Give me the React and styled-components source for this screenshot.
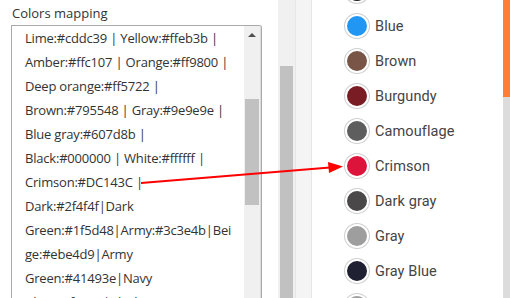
import React from "react";
import styled, { createGlobalStyle } from "styled-components";

const GlobalStyle = createGlobalStyle`
  html, body {
    margin: 0;
    padding: 0;
    background: #fff;
    overflow: hidden;
  }
`;

const Page = styled.div`
  position: relative;
  display: flex;
  width: 510px;
  height: 298px;
  overflow: hidden;
  background: #fff;
`;

const LeftPane = styled.div`
  width: 278px;
  padding: 5px 0 0 11px;
  box-sizing: border-box;
  font-family: "Open Sans", "Noto Sans", sans-serif;
  color: #333;
`;

const Label = styled.div`
  font-size: 13px;
  line-height: 17px;
  margin: 0 0 3px 1px;
  color: #333;
`;

const TextBox = styled.div`
  display: flex;
  width: 251px;
  height: 300px;
  border: 1px solid #a9a9a9;
  border-bottom: none;
  border-radius: 0 3px 0 0;
  box-sizing: border-box;
  overflow: hidden;
`;

const Lines = styled.div`
  flex: 1;
  padding: 0 0 0 13px;
  font-size: 13px;
  line-height: 24px;
  color: #333;
  white-space: nowrap;
  letter-spacing: -0.2px;
`;

const Track = styled.div`
  display: flex;
  flex-direction: column;
  align-items: center;
  width: ${(p) => p.$w}px;
  background: #f0f0f0;
  border-right: ${(p) => (p.$edge ? "1px solid #dcdcdc" : "none")};
  padding-top: ${(p) => p.$top}px;
  box-sizing: border-box;
`;

const Arrow = styled.div`
  width: 0;
  height: 0;
  border-left: 4px solid transparent;
  border-right: 4px solid transparent;
  border-bottom: 4px solid #505050;
  margin-bottom: ${(p) => p.$gap}px;
`;

const Thumb = styled.div`
  width: ${(p) => p.$w}px;
  height: ${(p) => p.$h}px;
  background: #c1c1c1;
`;

const Strip = styled.div`
  width: 15px;
  background: #f4f4f4;
  border-left: 1px solid #e6e6e6;
  border-right: 1px solid #e6e6e6;
`;

const RightPane = styled.div`
  flex: 1;
  display: flex;
  flex-direction: column;
  gap: 9px;
  padding-left: 33px;
  margin-top: -22px;
  font-family: Roboto, "Noto Sans", sans-serif;
`;

const Item = styled.div`
  flex: none;
  display: flex;
  align-items: center;
  gap: 6px;
  height: 26px;
  font-size: 14.5px;
  color: #444;
  letter-spacing: 0.1px;
`;

const Swatch = styled.span`
  width: 20px;
  height: 20px;
  border-radius: 50%;
  background: ${(p) => p.$c};
  border: 2px solid #fff;
  box-shadow: 0 0 0 1px #cfcfcf;
  flex: none;
`;

const Scroll = styled.div`
  display: flex;
  flex-direction: column;
  width: 7px;
  background: #dcdcdc;
`;

const ScrollThumb = styled.div`
  height: 97px;
  background: #fd7e34;
`;

const Pointer = styled.svg`
  position: absolute;
  left: 0;
  top: 0;
  pointer-events: none;
`;

const lines = [
  "Lime:#cddc39 | Yellow:#ffeb3b |",
  "Amber:#ffc107 | Orange:#ff9800 |",
  "Deep orange:#ff5722 |",
  "Brown:#795548 | Gray:#9e9e9e |",
  "Blue gray:#607d8b |",
  "Black:#000000 | White:#ffffff |",
  "Crimson:#DC143C |",
  "Dark:#2f4f4f|Dark",
  "Green:#1f5d48|Army:#3c3e4b|Bei",
  "ge:#ebe4d9|Army",
  "Green:#41493e|Navy",
  "Blue:#1f2631|Black Navy",
];

const colors = [
  ["Black", "#222222"],
  ["Blue", "#2196f3"],
  ["Brown", "#795548"],
  ["Burgundy", "#7a1c24"],
  ["Camouflage", "#5f5e5e"],
  ["Crimson", "#dc143c"],
  ["Dark gray", "#4a4849"],
  ["Gray", "#9e9e9e"],
  ["Gray Blue", "#1f2031"],
  ["Green", "#a0a0a0"],
];

const App = () => (
  <>
    <GlobalStyle />
    <Page>
      <LeftPane>
        <Label>Colors mapping</Label>
        <TextBox>
          <Lines>
            {lines.map((l) => (
              <div key={l}>{l}</div>
            ))}
          </Lines>
          <Track $w={17} $top={7} $edge>
            <Arrow $gap={62} />
            <Thumb $w={14} $h={106} />
          </Track>
        </TextBox>
      </LeftPane>
      <Track $w={17} $top={66}>
        <Thumb $w={13} $h={240} />
      </Track>
      <Strip />
      <RightPane>
        {colors.map(([name, c]) => (
          <Item key={name}>
            <Swatch $c={c} />
            {name}
          </Item>
        ))}
      </RightPane>
      <Scroll>
        <ScrollThumb />
      </Scroll>
      <Pointer width="510" height="298">
        <line x1="141" y1="183" x2="330" y2="167.5" stroke="#f00" strokeWidth="2" />
        <polygon points="343,166.5 328,162 329,173" fill="#f00" />
      </Pointer>
    </Page>
  </>
);

export default App;
